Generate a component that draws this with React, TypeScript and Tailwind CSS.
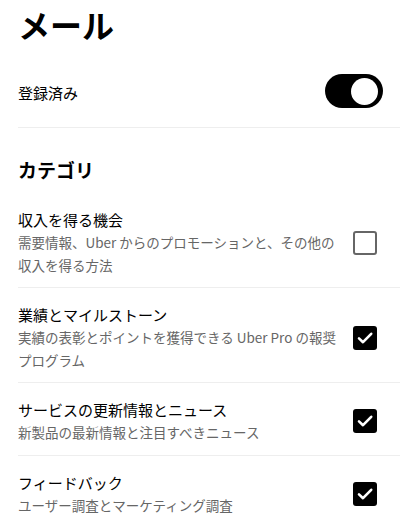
import React from 'react';

type Category = {
  title: string;
  description: string;
  checked: boolean;
};

const categories: Category[] = [
  {
    title: '収入を得る機会',
    description: '需要情報、Uber からのプロモーションと、その他の収入を得る方法',
    checked: false,
  },
  {
    title: '業績とマイルストーン',
    description: '実績の表彰とポイントを獲得できる Uber Pro の報奨プログラム',
    checked: true,
  },
  {
    title: 'サービスの更新情報とニュース',
    description: '新製品の最新情報と注目すべきニュース',
    checked: true,
  },
  {
    title: 'フィードバック',
    description: 'ユーザー調査とマーケティング調査',
    checked: true,
  },
];

function Toggle() {
  return (
    <div className="w-[58px] h-[34px] rounded-full bg-black flex items-center justify-end pr-[5px]">
      <div className="w-[27px] h-[27px] rounded-full bg-white" />
    </div>
  );
}

function Checkbox({ checked }: { checked: boolean }) {
  if (!checked) {
    return <div className="w-[24px] h-[24px] shrink-0 rounded-[3px] border-[2.5px] border-[#666666]" />;
  }
  return (
    <div className="w-[24px] h-[24px] shrink-0 rounded-[3px] bg-black flex items-center justify-center">
      <svg width="20" height="20" viewBox="0 0 20 20" fill="none">
        <path d="M4 10.4L8 14.2L16.2 5.8" stroke="white" strokeWidth="2.6" strokeLinecap="round" strokeLinejoin="round" />
      </svg>
    </div>
  );
}

export default function App() {
  return (
    <div className="w-[400px] h-[527px] overflow-hidden bg-white text-black font-['Noto_Sans_CJK_JP',sans-serif]">
      <div className="pl-[18px]">
        {/* Header */}
        <h1 className="pt-[4px] text-[32px] leading-[40px] font-bold">メール</h1>

        {/* Subscribed row */}
        <div className="flex items-center justify-between pt-[30px] pb-[19px] pr-[17px] border-b border-[#eeeeee]">
          <span className="text-[15px] leading-[22px] mt-[3px]">登録済み</span>
          <Toggle />
        </div>

        {/* Categories */}
        <h2 className="mt-[28px] mb-[9px] text-[19px] leading-[28px] font-bold">カテゴリ</h2>

        {categories.map((c) => (
          <div
            key={c.title}
            className="flex items-center justify-between pt-[16px] pb-[11px] pr-[23px] border-b border-[#eeeeee]"
          >
            <div className="flex-1 min-w-0 pr-[12px]">
              <div className="text-[15px] leading-[22px]">{c.title}</div>
              <div className="text-[13.5px] leading-[22.5px] text-[#666666]">{c.description}</div>
            </div>
            <Checkbox checked={c.checked} />
          </div>
        ))}
      </div>
    </div>
  );
}
